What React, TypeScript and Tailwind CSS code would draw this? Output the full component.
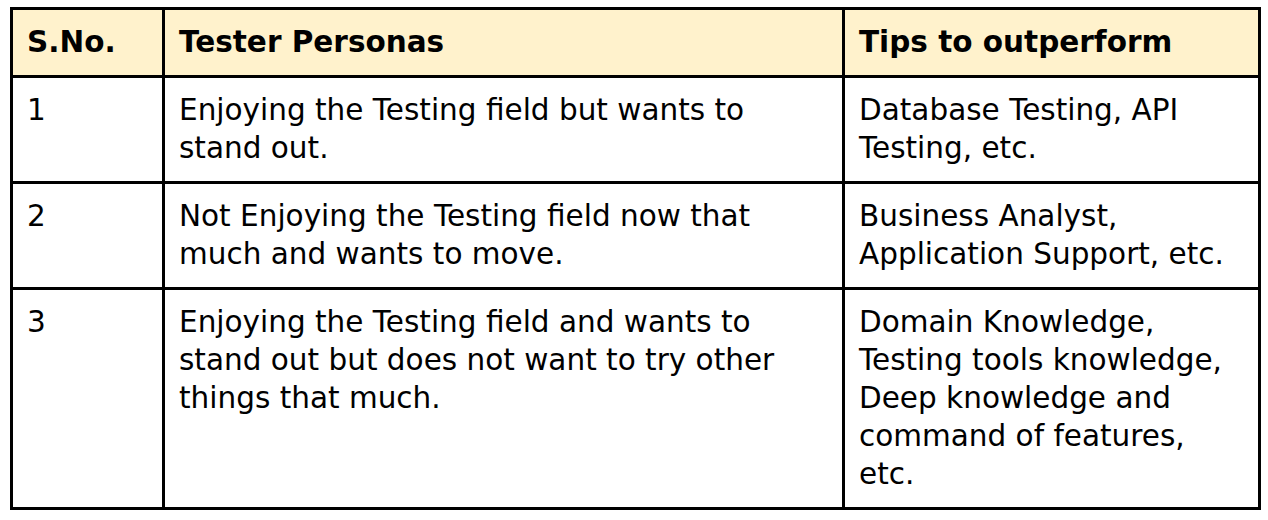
const rows = [
  {
    no: "1",
    persona: "Enjoying the Testing field but wants to stand out.",
    tips: "Database Testing, API Testing, etc.",
  },
  {
    no: "2",
    persona: "Not Enjoying the Testing field now that much and wants to move.",
    tips: "Business Analyst, Application Support, etc.",
  },
  {
    no: "3",
    persona:
      "Enjoying the Testing field and wants to stand out but does not want to try other things that much.",
    tips: "Domain Knowledge, Testing tools knowledge, Deep knowledge and command of features, etc.",
  },
];

function App() {
  return (
    <div className="bg-white min-h-[520px] pt-[7px] pl-[10px] font-['DejaVu_Sans',sans-serif] text-black">
      <table className="border-collapse table-fixed w-[1248px] text-[29.5px] leading-[38px]">
        <colgroup>
          <col className="w-[152px]" />
          <col className="w-[680px]" />
          <col className="w-[416px]" />
        </colgroup>
        <thead>
          <tr className="bg-[#fff2cc] font-bold">
            <th className="border-[3px] border-black text-left align-top pt-[13px] pb-[14px] pl-[14px]">S.No.</th>
            <th className="border-[3px] border-black text-left align-top pt-[13px] pb-[14px] pl-[14px]">Tester Personas</th>
            <th className="border-[3px] border-black text-left align-top pt-[13px] pb-[14px] pl-[14px]">Tips to outperform</th>
          </tr>
        </thead>
        <tbody>
          {rows.map((row) => (
            <tr key={row.no}>
              <td className="border-[3px] border-black align-top pt-[13px] pb-[14px] pl-[14px]">{row.no}</td>
              <td className="border-[3px] border-black align-top pt-[13px] pb-[14px] pl-[14px] pr-[43px]">{row.persona}</td>
              <td className="border-[3px] border-black align-top pt-[13px] pb-[14px] pl-[14px] pr-[16px]">{row.tips}</td>
            </tr>
          ))}
        </tbody>
      </table>
    </div>
  );
}

export default App;
